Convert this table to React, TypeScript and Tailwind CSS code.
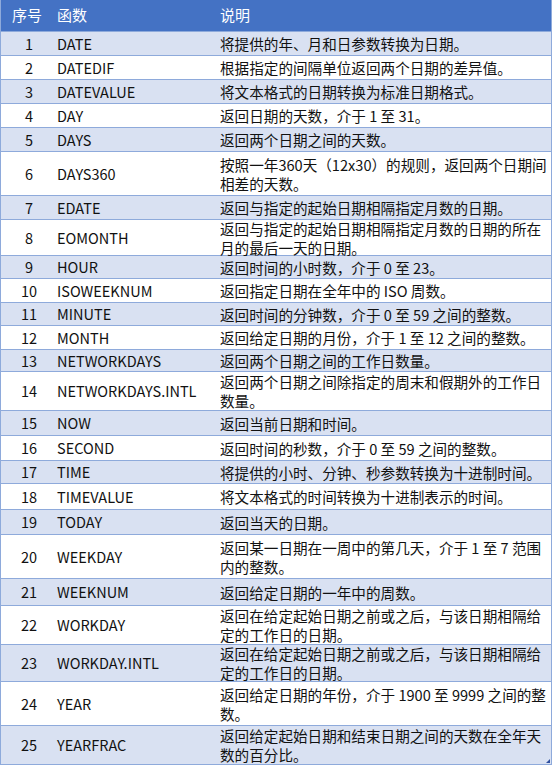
import React from 'react';

type Row = { no: number; name: string; desc: string; h: number };

const rows: Row[] = [
  { no: 1, name: 'DATE', desc: '将提供的年、月和日参数转换为日期。', h: 24 },
  { no: 2, name: 'DATEDIF', desc: '根据指定的间隔单位返回两个日期的差异值。', h: 24 },
  { no: 3, name: 'DATEVALUE', desc: '将文本格式的日期转换为标准日期格式。', h: 24 },
  { no: 4, name: 'DAY', desc: '返回日期的天数，介于 1 至 31。', h: 24 },
  { no: 5, name: 'DAYS', desc: '返回两个日期之间的天数。', h: 24 },
  { no: 6, name: 'DAYS360', desc: '按照一年360天（12x30）的规则，返回两个日期间相差的天数。', h: 44 },
  { no: 7, name: 'EDATE', desc: '返回与指定的起始日期相隔指定月数的日期。', h: 24 },
  { no: 8, name: 'EOMONTH', desc: '返回与指定的起始日期相隔指定月数的日期的所在月的最后一天的日期。', h: 36 },
  { no: 9, name: 'HOUR', desc: '返回时间的小时数，介于 0 至 23。', h: 23 },
  { no: 10, name: 'ISOWEEKNUM', desc: '返回指定日期在全年中的 ISO 周数。', h: 24 },
  { no: 11, name: 'MINUTE', desc: '返回时间的分钟数，介于 0 至 59 之间的整数。', h: 23 },
  { no: 12, name: 'MONTH', desc: '返回给定日期的月份，介于 1 至 12 之间的整数。', h: 24 },
  { no: 13, name: 'NETWORKDAYS', desc: '返回两个日期之间的工作日数量。', h: 22 },
  { no: 14, name: 'NETWORKDAYS.INTL', desc: '返回两个日期之间除指定的周末和假期外的工作日数量。', h: 39 },
  { no: 15, name: 'NOW', desc: '返回当前日期和时间。', h: 25 },
  { no: 16, name: 'SECOND', desc: '返回时间的秒数，介于 0 至 59 之间的整数。', h: 25 },
  { no: 17, name: 'TIME', desc: '将提供的小时、分钟、秒参数转换为十进制时间。', h: 23 },
  { no: 18, name: 'TIMEVALUE', desc: '将文本格式的时间转换为十进制表示的时间。', h: 26 },
  { no: 19, name: 'TODAY', desc: '返回当天的日期。', h: 25 },
  { no: 20, name: 'WEEKDAY', desc: '返回某一日期在一周中的第几天，介于 1 至 7 范围内的整数。', h: 44 },
  { no: 21, name: 'WEEKNUM', desc: '返回给定日期的一年中的周数。', h: 27 },
  { no: 22, name: 'WORKDAY', desc: '返回在给定起始日期之前或之后，与该日期相隔给定的工作日的日期。', h: 39 },
  { no: 23, name: 'WORKDAY.INTL', desc: '返回在给定起始日期之前或之后，与该日期相隔给定的工作日的日期。', h: 37 },
  { no: 24, name: 'YEAR', desc: '返回给定日期的年份，介于 1900 至 9999 之间的整数。', h: 44 },
  { no: 25, name: 'YEARFRAC', desc: '返回给定起始日期和结束日期之间的天数在全年天数的百分比。', h: 39 },
];

export default function App() {
  return (
    <div
      className="relative w-[552px] h-[765px] overflow-hidden bg-white text-[#111] border-x border-[#8eaadb]"
      style={{ fontFamily: '"Noto Sans CJK SC", "Microsoft YaHei", sans-serif' }}
    >
      <div className="flex items-center h-[32px] bg-[#4472c4] text-white text-[15px] border-b border-[#8eaadb]">
        <div className="w-[56px] pl-[11px]">序号</div>
        <div className="w-[162px]">函数</div>
        <div className="flex-1 pl-[1px]">说明</div>
      </div>
      {rows.map((r) => (
        <div
          key={r.no}
          className={`flex items-center border-b border-[#8eaadb] ${r.no % 2 === 1 ? 'bg-[#d9e1f2]' : 'bg-white'}`}
          style={{ height: r.h }}
        >
          <div className="w-[56px] text-center text-[14.5px]">{r.no}</div>
          <div className="w-[162px] text-[14.5px]">{r.name}</div>
          <div className="flex-1 pl-[1px] pr-[2px] text-[14.6px] leading-[19px] break-all">{r.desc}</div>
        </div>
      ))}
      <div className="absolute right-[1px] bottom-[2px] w-0 h-0 border-l-[4px] border-l-transparent border-b-[4px] border-b-[#2f4f9f]" />
    </div>
  );
}
